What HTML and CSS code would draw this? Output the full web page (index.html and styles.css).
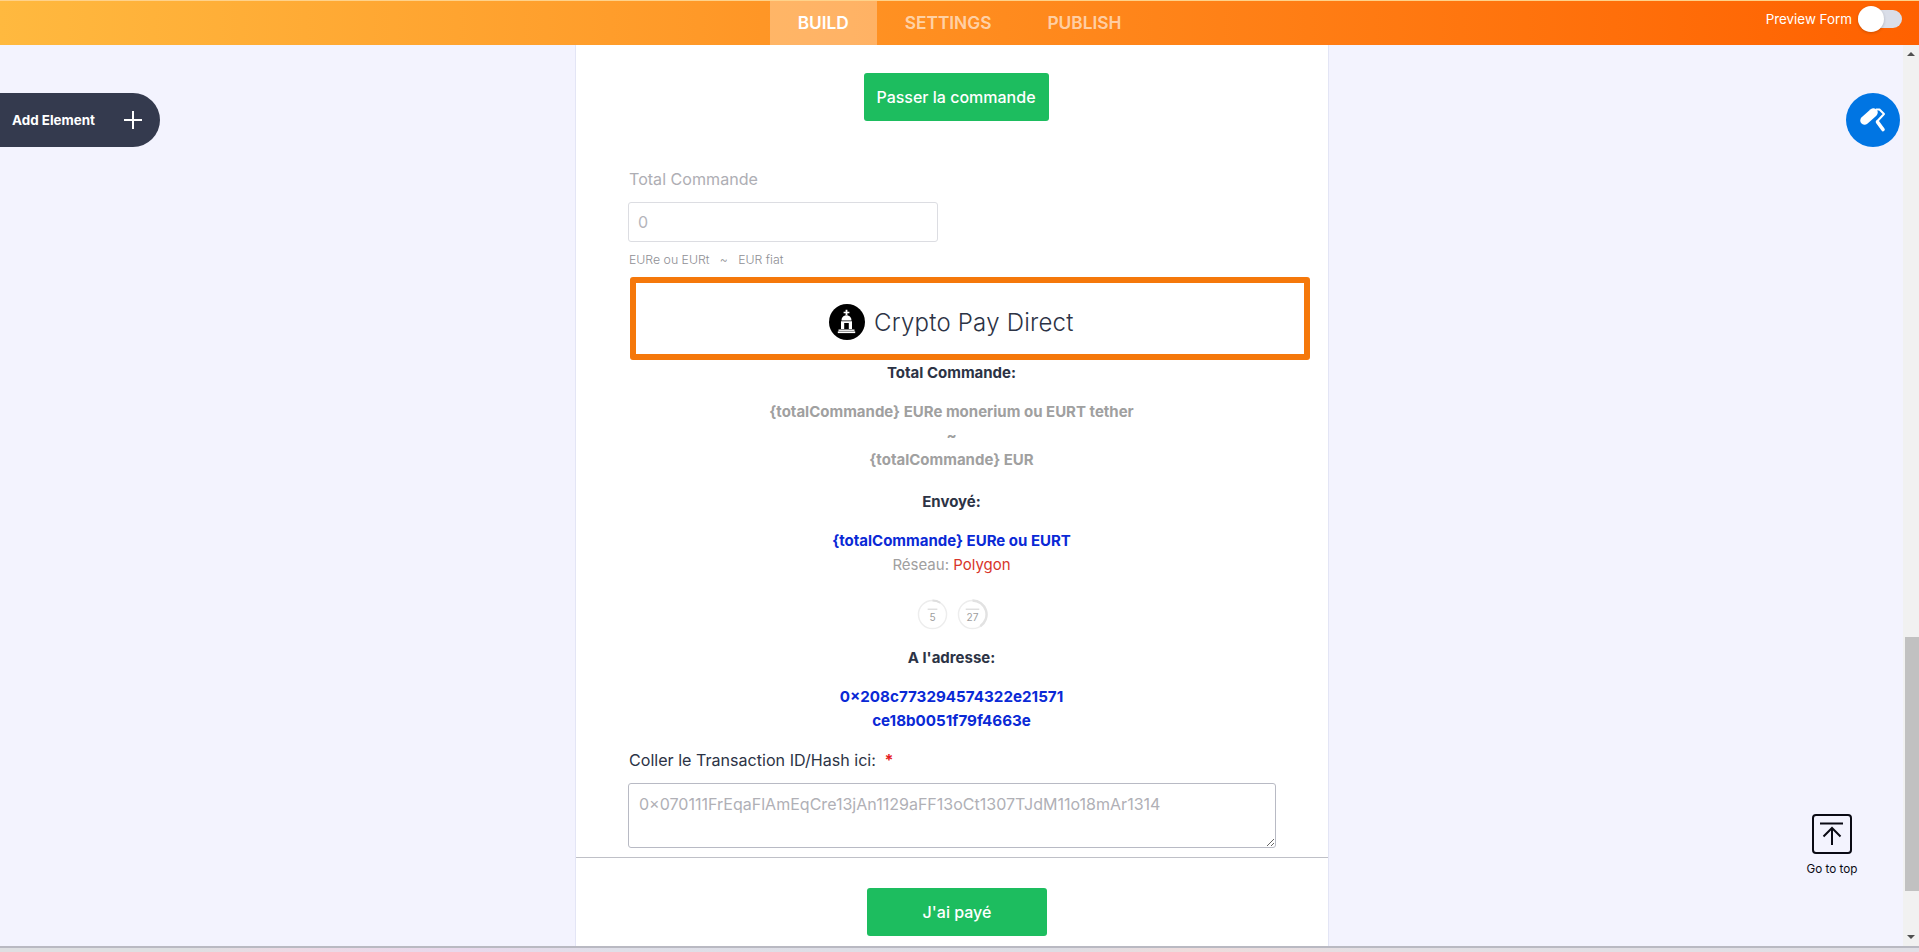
FILE: index.html
```html
<!DOCTYPE html>
<html lang="fr">
<head>
<meta charset="utf-8">
<title>Form Builder</title>
<link rel="stylesheet" href="styles.css">
</head>
<body>
<header class="topbar">
  <nav class="tabs">
    <a class="tab tab-active">BUILD</a>
    <a class="tab">SETTINGS</a>
    <a class="tab">PUBLISH</a>
  </nav>
  <div class="preview">
    <span>Preview Form</span>
    <span class="toggle"><span class="knob"></span></span>
  </div>
</header>
<div class="workspace">
  <main class="canvas">
    <section class="card">
      <div class="row-center submit-top"><button class="btn btn-order">Passer la commande</button></div>
      <div class="field-total">
        <div class="label-muted">Total Commande</div>
        <div class="input-total">0</div>
        <div class="hint">EURe ou EURt &nbsp; ~ &nbsp; EUR fiat</div>
      </div>
      <div class="pay-box">
        <svg class="pay-icon" viewBox="0 0 36 36" aria-hidden="true">
          <circle cx="18" cy="18" r="18" fill="#000"/>
          <path d="M16.600 5.700h1.800v2h2v1.600h-2v1.700h-1.800V9.300h-2V7.700h2z" fill="#fff"/>
          <path d="M12.500 16.500c0-3.200 2.200-5.300 5-5.300s5 2.100 5 5.300z" fill="#fff"/>
          <path d="M12 17.300h11v7.700h-3.200v-6h-4.600v6H12z" fill="#fff"/>
          <rect x="9.500" y="25.500" width="16" height="1.400" fill="#fff"/>
          <rect x="8.800" y="27.400" width="17.400" height="1.700" fill="#fff"/>
        </svg>
        <span class="pay-title">Crypto Pay Direct</span>
      </div>
      <div class="info">
        <p class="strong l-total">Total Commande:</p>
        <p class="muted-bold l-amount">{totalCommande} EURe monerium ou EURT tether</p>
        <p class="muted-bold">~</p>
        <p class="muted-bold">{totalCommande} EUR</p>
        <p class="strong l-sent">Envoyé:</p>
        <p class="blue l-blue">{totalCommande} EURe ou EURT</p>
        <p class="network">Réseau: <span class="red">Polygon</span></p>
        <div class="timers">
          <svg class="timer" viewBox="0 0 32 32" aria-hidden="true">
            <circle cx="16" cy="16" r="14.500" fill="none" stroke="#ededed" stroke-width="1.500"/>
            <path d="M16 1.500A14.500 14.500 0 0 1 24 3.900" fill="none" stroke="#dedede" stroke-width="2"/>
            <rect x="11" y="10" width="10" height="1" fill="#cfcfcf"/>
            <text x="16" y="23" class="timer-num">5</text>
          </svg>
          <svg class="timer" viewBox="0 0 32 32" aria-hidden="true">
            <circle cx="16" cy="16" r="14.500" fill="none" stroke="#ededed" stroke-width="1.500"/>
            <path d="M16 1.500A14.500 14.500 0 0 1 24 28.100" fill="none" stroke="#e2e2e2" stroke-width="2.500"/>
            <rect x="9" y="10" width="14" height="1" fill="#cfcfcf"/>
            <text x="16" y="23" class="timer-num">27</text>
          </svg>
        </div>
        <p class="strong l-addr">A l'adresse:</p>
        <p class="blue l-hash1 hash">0×208c773294574322e21571</p>
        <p class="blue hash">ce18b0051f79f4663e</p>
      </div>
      <div class="field-hash">
        <label class="label">Coller le Transaction ID/Hash ici: <span class="req">*</span></label>
        <textarea class="textarea" placeholder="0×070111FrEqaFlAmEqCre13jAn1129aFF13oCt1307TJdM11o18mAr1314"></textarea>
      </div>
      <div class="footer-row"><button class="btn btn-paid">J'ai payé</button></div>
    </section>

    <button class="add-element">
      <span>Add Element</span>
      <svg class="plus" viewBox="0 0 18 18" aria-hidden="true"><path d="M9 0v18M0 9h18" stroke="#fff" stroke-width="2" fill="none"/></svg>
    </button>
    <button class="paint">
      <svg viewBox="0 0 28 28" aria-hidden="true">
        <path d="M5.500 14.500L14.500 6.500" fill="none" stroke="#fff" stroke-width="8.500" stroke-linecap="round"/>
        <path d="M17 3.500h3.500l4.500 4.500-7 7.500" fill="none" stroke="#fff" stroke-width="2" stroke-linejoin="round"/>
        <path d="M18.500 16l5.500 7.500" fill="none" stroke="#fff" stroke-width="3.600" stroke-linecap="round"/>
      </svg>
    </button>
    <div class="go-top">
      <svg viewBox="0 0 40 40" aria-hidden="true">
        <rect x="1" y="1" width="38" height="38" rx="3" fill="none" stroke="#0a0a14" stroke-width="2"/>
        <path d="M8 9.500h23M20 31V14.500M11.500 22.500l8.500-8.500 8.500 8.500" fill="none" stroke="#0a0a14" stroke-width="2"/>
      </svg>
      <span>Go to top</span>
    </div>
  </main>
  <aside class="scrollbar">
    <span class="arrow arrow-up"></span>
    <span class="track"><span class="thumb"></span></span>
    <span class="arrow arrow-down"></span>
  </aside>
</div>
<div class="strip"></div>
</body>
</html>
```
FILE: styles.css
```css
* { box-sizing: border-box; }
html, body { margin: 0; height: 100%; overflow: hidden; }
body {
  display: flex;
  flex-direction: column;
  width: 1919px;
  height: 952px;
  font-family: Inter, "Liberation Sans", sans-serif;
  color: #2c3345;
  background: #f3f3fe;
}
p { margin: 0; }
button { font-family: inherit; border: 0; padding: 0; cursor: pointer; }

.topbar {
  flex: none;
  height: 45px;
  position: relative;
  display: flex;
  justify-content: center;
  background: linear-gradient(90deg, #ffb93f 0%, #ff6100 100%);
  border-top: 1px solid #ffd28a;
}
.tabs { display: flex; }
.tab {
  display: flex;
  align-items: center;
  padding: 0 28px 1px;
  font-size: 17.300px;
  font-weight: 600;
  color: rgba(255, 255, 255, .62);
  line-height: 43px;
}
.tab-active { background: rgba(255, 255, 255, .3); color: #fff; }
.preview {
  position: absolute;
  right: 17px;
  top: 9px;
  display: flex;
  align-items: center;
  gap: 6px;
  font-size: 13.400px;
  color: #fff;
}
.toggle { position: relative; display: block; width: 44px; height: 18px; border-radius: 9px; background: #dadee8; }
.knob { position: absolute; left: 0; top: -4px; width: 26px; height: 26px; border-radius: 50%; background: #fff; box-shadow: 0 1px 3px rgba(0,0,0,.2); }

.workspace { flex: 1; min-height: 0; display: flex; }
.canvas { flex: 1; position: relative; min-width: 0; overflow: hidden; }
.card {
  width: 754px;
  height: 901px;
  margin-left: 575px;
  background: #fff;
  border-left: 1px solid #e3e5f5;
  border-right: 1px solid #e3e5f5;
  display: flex;
  flex-direction: column;
}
.row-center { display: flex; justify-content: center; }
.submit-top { padding-top: 28px; padding-left: 8px; }
.btn { background: #1dbd5f; color: #fff; border-radius: 3px; font-size: 16px; font-weight: 500; height: 48px; }
.btn-order { width: 185px; }
.field-total { padding: 47px 0 0 52px; }
.label-muted { font-size: 16.100px; line-height: 22px; color: #aeaeb4; padding-left: 1px; }
.input-total {
  width: 310px;
  height: 40px;
  margin-top: 12px;
  padding: 0 9px;
  border: 1px solid #dcdde2;
  border-radius: 3px;
  font-size: 16px;
  line-height: 38px;
  color: #b5b5bb;
}
.hint { margin-top: 10px; padding-left: 1px; font-size: 12.300px; font-weight: 300; line-height: 16px; color: #8f8f95; }

.pay-box {
  width: 680px;
  height: 83px;
  margin: 9px 0 0 54px;
  padding: 7px 0 0 193px;
  border: 6px solid #f5780b;
  border-radius: 3px;
  display: flex;
  align-items: center;
  gap: 9px;
  background: #fff;
}
.pay-icon { width: 36px; height: 36px; flex: none; }
.pay-title { font-size: 24px; font-weight: 300; letter-spacing: .23px; color: #2c3345; }

.info { width: 680px; margin-left: 54px; padding-right: 37px; text-align: center; font-size: 15px; line-height: 24px; }
.strong { font-weight: 700; color: #2c3345; }
.muted-bold { font-weight: 700; color: #a0a0a0; }
.blue { font-weight: 700; color: #0a29d6; }
.hash { font-size: 15.200px; }
.network { color: #a0a0a0; }
.red { color: #d8352a; }
.l-total { margin-top: 1px; }
.l-amount { margin-top: 15px; }
.l-sent { margin-top: 18px; }
.l-blue { margin-top: 15px; }
.timers { display: flex; justify-content: center; gap: 9px; margin-top: 22px; height: 31px; padding-left: 2px; }
.timer { width: 31px; height: 31px; }
.timer-num { font-family: Inter, sans-serif; font-size: 10.500px; fill: #9d9d9d; text-anchor: middle; }
.l-addr { margin-top: 16px; }
.l-hash1 { margin-top: 15px; }

.field-hash { padding: 16px 0 0 52px; }
.label { display: block; padding-left: 1px; font-size: 16.100px; line-height: 22px; color: #2c3345; }
.req { color: #e51c23; font-weight: 700; margin-left: 4px; }
.textarea {
  display: block;
  width: 648px;
  height: 65px;
  margin-top: 12px;
  padding: 10px;
  border: 1px solid #b8bac4;
  border-radius: 3px;
  font: 16.050px Inter, sans-serif;
  color: #2c3345;
  outline: 0;
}
.textarea::placeholder { color: #b0b0b6; opacity: 1; }
.footer-row {
  margin-top: 9px;
  padding: 30px 0 0 10px;
  border-top: 1px solid #bfc0c7;
  display: flex;
  justify-content: center;
}
.btn-paid { width: 180px; }

.add-element {
  position: absolute;
  left: 0;
  top: 48px;
  width: 160px;
  height: 54px;
  padding: 0 18px 0 12px;
  display: flex;
  align-items: center;
  justify-content: space-between;
  background: #343a4e;
  border-radius: 0 27px 27px 0;
  color: #fff;
  font-size: 13.400px;
  font-weight: 700;
}
.plus { width: 18px; height: 18px; }
.paint {
  position: absolute;
  left: 1846px;
  top: 48px;
  width: 54px;
  height: 54px;
  border-radius: 50%;
  background: #0075e3;
  display: flex;
  align-items: center;
  justify-content: center;
}
.paint svg { width: 28px; height: 28px; }
.go-top {
  position: absolute;
  left: 1802px;
  top: 769px;
  width: 60px;
  display: flex;
  flex-direction: column;
  align-items: center;
  gap: 7px;
  font-size: 11.700px;
  font-weight: 400;
  color: #0a0a14;
}
.go-top svg { width: 40px; height: 40px; }
.go-top span { white-space: nowrap; line-height: 16px; }

.scrollbar { flex: none; width: 16px; display: flex; flex-direction: column; background: #f1f1f1; }
.arrow { flex: none; height: 16px; position: relative; }
.arrow::after { content: ""; position: absolute; left: 4px; border-left: 4px solid transparent; border-right: 4px solid transparent; }
.arrow-up::after { top: 7px; border-bottom: 4px solid #505050; }
.arrow-down::after { top: 5px; border-top: 4px solid #505050; }
.track { flex: 1; position: relative; display: block; }
.thumb { position: absolute; left: 2px; right: 0; bottom: 39px; height: 254px; background: #c1c1c1; }

.strip {
  flex: none;
  height: 6px;
  border-top: 2px solid #b9b9c2;
  background: linear-gradient(90deg, #dedfe2 0%, #dedfe2 10%, #ecd9e4 15%, #e8d8ec 24%, #dfdfe8 32%, #dddde4 55%, #eedcdc 62%, #e2dfe4 72%, #e0dfe6 100%);
}
```
